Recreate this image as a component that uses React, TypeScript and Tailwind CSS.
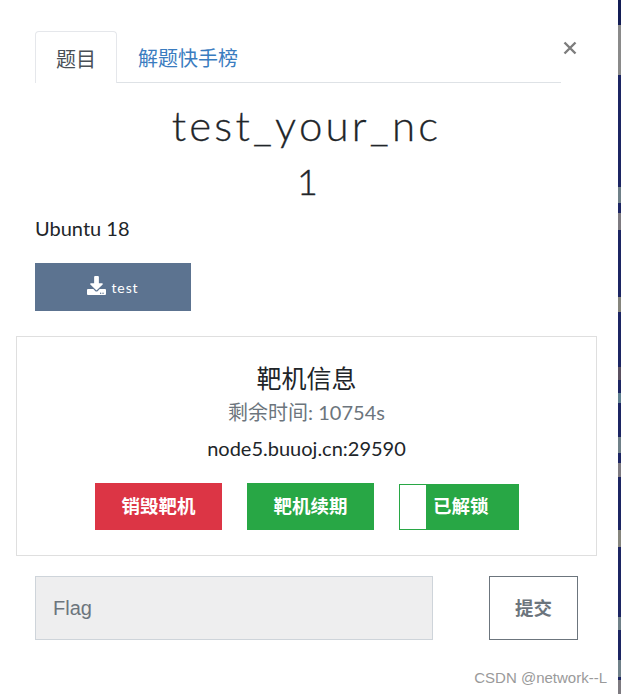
import React from "react";

const cjk = `Lato, "Noto Sans CJK SC", sans-serif`;

function Strip() {
  const segs: [number, string][] = [
    [25, "#131d55"], [50, "#8a8a8a"], [112, "#1c2563"], [16, "#6f8088"], [10, "#1c2563"], [17, "#7d7a80"],
    [67, "#1c2563"], [15, "#85857d"], [55, "#1c2563"], [13, "#5a5060"], [13, "#1c2563"], [10, "#5f8090"], [34, "#1c2563"],
    [16, "#6f8088"], [10, "#1c2563"], [14, "#7d7a80"], [53, "#1c2563"], [17, "#85857d"], [70, "#1c2563"], [13, "#6f8088"],
    [30, "#1c2563"], [17, "#6f8088"], [3, "#1c2563"], [14, "#7d7a80"],
  ];
  return (
    <div className="flex w-[3px] shrink-0 flex-col">
      {segs.map(([h, c], i) => (
        <div key={i} className="shrink-0" style={{ height: h, backgroundColor: c }} />
      ))}
    </div>
  );
}

export default function App() {
  return (
    <div className="flex h-[694px] w-[621px] overflow-hidden bg-white" style={{ fontFamily: cjk }}>
      <div className="relative w-[618px] shrink-0 bg-white">
        <button className="absolute left-[561px] top-[37px] flex h-[22px] w-[17px] items-center justify-center text-[#7d7d7d]">
          <svg width="14" height="14" viewBox="0 0 14 14" fill="none" stroke="currentColor" strokeWidth="2.4">
            <path d="M1.500 1.500 12.500 12.500M12.500 1.500 1.500 12.500" />
          </svg>
        </button>

        <div className="ml-[35px] mr-[57px] mt-[31px] flex h-[52px] border-b border-[#dee2e6]">
          <div className="-mb-px flex h-[52px] w-[82px] items-center justify-center rounded-t border border-b-0 border-[#e5e7eb] bg-white pt-[2px] text-[20px] text-[#495057]">
            题目
          </div>
          <div className="flex h-[51px] items-center pl-[21px] pt-[3px] text-[20px] text-[#3a7cbf]">解题快手榜</div>
        </div>

        <h1 className="mt-[14px] pr-[5px] text-center text-[42px] leading-[56px] font-light tracking-[3.200px] text-[#212529] [-webkit-text-stroke:0.3px_#212529]">
          test_your_nc
        </h1>
        <div className="mt-[1px] pr-[3px] text-center text-[36px] leading-[54px] font-light text-[#212529] [-webkit-text-stroke:0.4px_#212529]">1</div>

        <p className="ml-[35px] mt-[5px] text-[20px] leading-[30px] text-[#212529]">Ubuntu 18</p>

        <div className="ml-[35px] mt-[20px] flex h-[48px] w-[156px] items-center justify-center bg-[#5c7390] text-[14px] tracking-[0.900px] text-white">
          <svg width="19" height="19" viewBox="0 0 512 512" fill="currentColor" className="mr-[5px] mb-[3px]">
            <path d="M216 0h80c13.300 0 24 10.700 24 24v168h87.700c17.800 0 26.700 21.500 14.100 34.100L269.700 378.300c-7.500 7.500-19.800 7.500-27.300 0L90.100 226.100c-12.600-12.600-3.700-34.100 14.100-34.100H192V24c0-13.300 10.700-24 24-24zm296 376v112c0 13.300-10.700 24-24 24H24c-13.300 0-24-10.700-24-24V376c0-13.300 10.700-24 24-24h146.700l49 49c20.100 20.100 52.500 20.100 72.600 0l49-49H488c13.300 0 24 10.700 24 24zm-124 88c0-11-9-20-20-20s-20 9-20 20 9 20 20 20 20-9 20-20zm64 0c0-11-9-20-20-20s-20 9-20 20 9 20 20 20 20-9 20-20z" />
          </svg>
          test
        </div>

        <div className="ml-[16px] mt-[25px] flex h-[220px] w-[581px] flex-col items-center border border-[#dfdfdf] pt-[23px]">
          <div className="text-[25px] leading-[36px] text-[#212529]">靶机信息</div>
          <div className="mt-[1px] text-[20px] leading-[30px] text-[#6c757d]">剩余时间: 10754s</div>
          <div className="mt-[6px] text-[20px] leading-[30px] text-[#212529]">node5.buuoj.cn:29590</div>
          <div className="mt-[20px] flex items-start gap-[25px] pl-[1px]">
            <div className="flex h-[47px] w-[127px] items-center justify-center bg-[#dc3545] text-[18.500px] font-bold text-white">销毁靶机</div>
            <div className="flex h-[47px] w-[127px] items-center justify-center bg-[#28a745] text-[18.500px] font-bold text-white">靶机续期</div>
            <div className="mt-[1px] flex h-[46px] w-[120px] items-center border border-[#28a745] bg-[#28a745] text-[18.500px] font-bold text-white">
              <div className="h-full w-[26px] bg-white" />
              <span className="ml-[7px]">已解锁</span>
            </div>
          </div>
        </div>

        <div className="ml-[35px] mt-[20px] flex items-start">
          <div className="flex h-[64px] w-[398px] items-center border border-[#ced4da] bg-[#eeeeef] pl-[17px] text-[20px] text-[#6c757d]" style={{ fontFamily: '"Liberation Sans", sans-serif' }}>
            Flag
          </div>
          <div className="ml-[56px] flex h-[64px] w-[89px] items-center justify-center border border-[#6c757d] pt-[2px] text-[18.500px] font-bold text-[#6c757d]">
            提交
          </div>
        </div>

        <div className="absolute right-[11px] top-[669px] text-[15px] leading-[18px] text-[#9a9a9a]" style={{ fontFamily: '"Liberation Sans", sans-serif' }}>
          CSDN @network--L
        </div>
      </div>
      <Strip />
    </div>
  );
}
